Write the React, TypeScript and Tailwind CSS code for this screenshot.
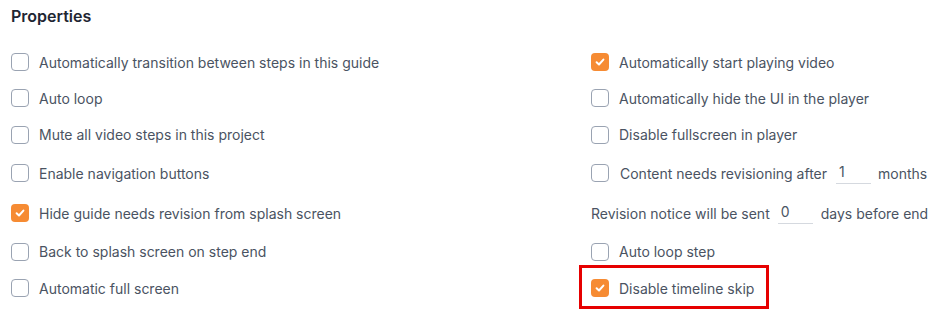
import React from "react";

function Box({ checked }: { checked?: boolean }) {
  if (checked) {
    return (
      <span className="flex h-[18px] w-[18px] shrink-0 items-center justify-center rounded-[4px] bg-[#f68b33]">
        <svg width="12" height="12" viewBox="0 0 12 12" fill="none">
          <path d="M2.6 6.3 L5 8.5 L9.4 3.6" stroke="white" strokeWidth="2" strokeLinecap="round" strokeLinejoin="round" />
        </svg>
      </span>
    );
  }
  return <span className="block h-[18px] w-[18px] shrink-0 rounded-[4px] border-[1.5px] border-[#9aa3b2] bg-white" />;
}

function Item({ label, checked }: { label: string; checked?: boolean }) {
  return (
    <div className="flex items-center gap-[10px]">
      <Box checked={checked} />
      <span>{label}</span>
    </div>
  );
}

function Num({ value }: { value: string }) {
  return (
    <span className="flex h-[22px] w-[35px] items-start border-b border-[#d5d9df] pl-[3px] leading-[20px] text-[#4b5563]">
      {value}
    </span>
  );
}

export default function App() {
  const left: { label: string; checked?: boolean }[] = [
    { label: "Automatically transition between steps in this guide" },
    { label: "Auto loop" },
    { label: "Mute all video steps in this project" },
    { label: "Enable navigation buttons" },
    { label: "Hide guide needs revision from splash screen", checked: true },
    { label: "Back to splash screen on step end" },
    { label: "Automatic full screen" },
  ];
  const heights = ["h-[36px]", "h-[36px]", "h-[37px]", "h-[40px]", "h-[40px]", "h-[37px]", "h-[36px]"];

  const right: React.ReactNode[] = [
    <Item key="a" label="Automatically start playing video" checked />,
    <Item key="b" label="Automatically hide the UI in the player" />,
    <Item key="c" label="Disable fullscreen in player" />,
    <div key="d" className="flex items-center">
      <Box />
      <span className="ml-[11px]">Content needs revisioning after</span>
      <span className="ml-[9px]">
        <Num value="1" />
      </span>
      <span className="ml-[7px]">months</span>
    </div>,
    <div key="e" className="flex items-center">
      <span>Revision notice will be sent</span>
      <span className="ml-[8px]">
        <Num value="0" />
      </span>
      <span className="ml-[8px]">days before end</span>
    </div>,
    <Item key="f" label="Auto loop step" />,
    <Item key="g" label="Disable timeline skip" checked />,
  ];

  return (
    <div
      className="relative h-[318px] w-[940px] overflow-hidden bg-white pl-[11px] text-[14px] text-[#4a5362]"
      style={{ fontFamily: "Inter, 'Noto Sans', sans-serif" }}
    >
      <div className="h-[32px] text-[16px] font-semibold leading-[32px] text-[#1f2633]">Properties</div>
      <div className="mt-[12px] flex flex-col">
        {left.map((l, i) => (
          <div key={i} className={`grid grid-cols-[580px_1fr] items-center ${heights[i]}`}>
            <Item label={l.label} checked={l.checked} />
            {right[i]}
          </div>
        ))}
      </div>
      <div className="pointer-events-none absolute left-[579px] top-[265px] h-[44px] w-[190px] border-[3px] border-[#e60000]" />
    </div>
  );
}
